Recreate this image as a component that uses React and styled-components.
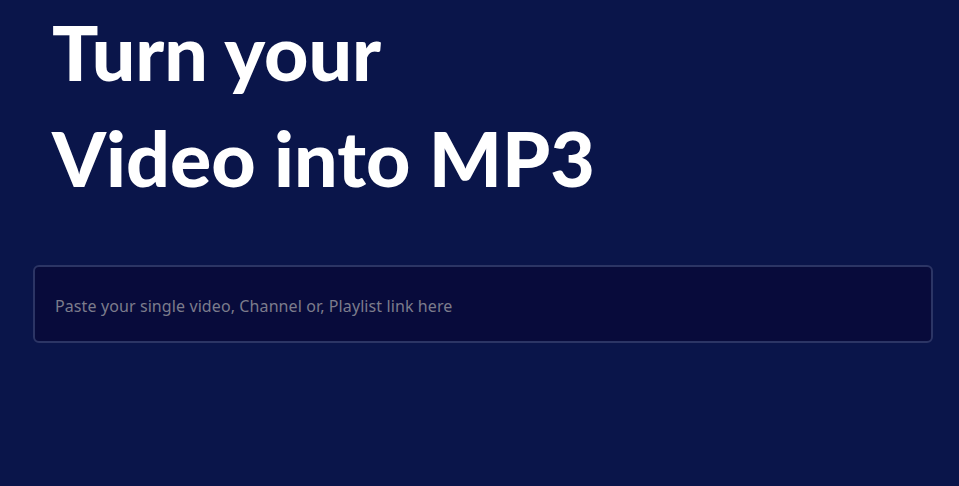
import React from "react";
import styled, { createGlobalStyle } from "styled-components";

const GlobalStyle = createGlobalStyle`
  html, body {
    margin: 0;
    padding: 0;
    background: #0a154a;
  }
  * {
    box-sizing: border-box;
  }
`;

const Page = styled.main`
  min-height: 486px;
  background: #0a154a;
  padding: 0 26px 0 33px;
  display: flex;
  flex-direction: column;
`;

const Heading = styled.h1`
  margin: -2px 0 0;
  padding: 0 0 0 19px;
  font-family: "Lato", "Noto Sans", sans-serif;
  font-weight: 900;
  font-size: 77px;
  line-height: 106px;
  color: #ffffff;
`;

const Field = styled.input`
  margin-top: 55px;
  width: 100%;
  height: 78px;
  padding: 4px 20px 0;
  background: #080b3b;
  border: 2px solid #2c3565;
  border-radius: 6px;
  color: #d6d6e0;
  font-family: "Noto Sans", "Open Sans", sans-serif;
  font-size: 16px;
  letter-spacing: 0.1px;
  outline: none;

  &::placeholder {
    color: #7c7c8c;
  }
`;

const App = () => {
  return (
    <>
      <GlobalStyle />
      <Page>
        <Heading>
          Turn your
          <br />
          Video into MP3
        </Heading>
        <Field
          type="text"
          placeholder="Paste your single video, Channel or, Playlist link here"
        />
      </Page>
    </>
  );
};

export default App;
